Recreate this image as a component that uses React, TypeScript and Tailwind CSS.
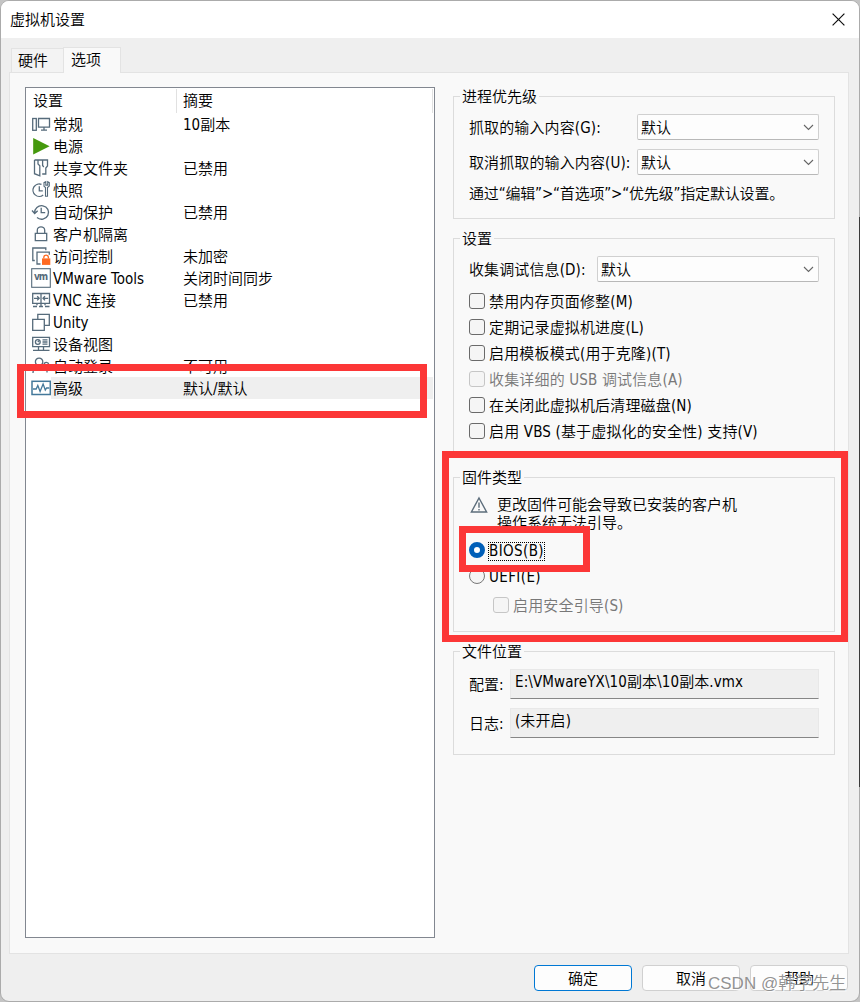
import { useState } from "react";
import type { ReactNode } from "react";

type Setting = {
  name: string;
  summary?: string;
  icon: ReactNode;
};

const settings: Setting[] = [
  {
    name: "常规",
    summary: "10副本",
    icon: (
      <>
        <rect x="2.7" y="5.5" width="3.6" height="11.8" />
        <path d="M8.5 5.5h11v8.7h-11zM14 14.2v2.6M11 17.2h6M4.5 8v0.1" />
      </>
    ),
  },
  {
    name: "电源",
    icon: <path d="M3.2 3v16.4L19.6 11.2z" fill="#45990d" stroke="none" />,
  },
  {
    name: "共享文件夹",
    summary: "已禁用",
    icon: <path d="M4.5 3h13v6l-1.7 2v6h-3.6M4.5 3v13.7l5.3 2.2V8.7L8 7V3.2M12.6 3v5.5l1.2 1.5" />,
  },
  {
    name: "快照",
    icon: (
      <>
        <path d="M11.5 5.4a6.2 6.2 0 1 0 1.7 10.5M9.3 7.3v4.6h3.5" />
        <path d="M14 3.5v3.7l1.5 1.3v8.8h2V8.5L19.3 7V3.5l-1.6-.8v3.4h-1.9V2.7z" strokeWidth="1.1" />
      </>
    ),
  },
  {
    name: "自动保护",
    summary: "已禁用",
    icon: <path d="M4.6 12A7 6.8 0 1 1 7 16.6M2 9.5l2.7 3 3-2.7M11.2 6.7v5h4" />,
  },
  {
    name: "客户机隔离",
    icon: <path d="M5.3 10.3h11.4v7.4H5.3zM7.3 10V7.3a3.7 3.5 0 0 1 7.4 0V10" />,
  },
  {
    name: "访问控制",
    summary: "未加密",
    icon: (
      <>
        <path d="M4.8 15.5H2.8V3h13v2.2M10.5 19H7V7.2h12.3v2.5" />
        <rect x="12" y="13.4" width="8.3" height="6.5" fill="#ff6a21" stroke="none" />
        <path d="M13.8 13.4v-1a2.3 2.3 0 0 1 4.6 0v1" stroke="#ff6a21" />
      </>
    ),
  },
  {
    name: "VMware Tools",
    summary: "关闭时间同步",
    icon: (
      <>
        <rect x="1.7" y="1.7" width="18.6" height="18.6" strokeWidth="1.1" />
        <text x="11" y="13.3" textAnchor="middle" fontSize="10" fontWeight="700" fill="#566b7b" stroke="none" textLength="14">
          vm
        </text>
      </>
    ),
  },
  {
    name: "VNC 连接",
    summary: "已禁用",
    icon: (
      <path d="M2.7 4.5h16.8v9.8H2.7zM11 4.5v12.7M3 17.5h4M9 17.5h4M15 17.5h4.5M7 14.3v2M15 14.3v2M4 9.3h5M7.2 7.2l2 2.1-2 2.1M18.2 9.3h-5M15 7.2l-2 2.1 2 2.1" />
    ),
  },
  {
    name: "Unity",
    icon: <path d="M7.8 8V3.3h11.5v11h-4.8M2.7 8.3h11.6v11H2.7z" />,
  },
  {
    name: "设备视图",
    icon: (
      <>
        <path d="M2.7 4.3h16.8v9.4H2.7zM8.5 14v3M13.5 14v3M3 17.3h16.5M12.5 6.8h5M12.5 9h5M12.5 11.2h5" />
        <circle cx="7.8" cy="9" r="2.4" />
        <path d="M7.8 9l1.6-1.6" />
      </>
    ),
  },
  {
    name: "自动登录",
    summary: "不可用",
    icon: <path d="M6.8 9.7a3.7 3.7 0 1 1 4.6 0l1.4 1.4M3 18c0-4 2-5.8 4.3-7M14 9.6a2.4 2.4 0 1 1 3 2.5v5.5" />,
  },
  {
    name: "高级",
    summary: "默认/默认",
    icon: (
      <g stroke="#43789a">
        <rect x="2" y="4.3" width="18.3" height="13.2" strokeWidth="1.5" />
        <path d="M3 12h3.2l1.6-3.5 2.3 6 3-7.5 2.2 6 1.3-2h2.7" />
      </g>
    ),
  },
];

const options = [
  { label: "禁用内存页面修整(M)" },
  { label: "定期记录虚拟机进度(L)" },
  { label: "启用模板模式(用于克隆)(T)" },
  { label: "收集详细的 USB 调试信息(A)", disabled: true },
  { label: "在关闭此虚拟机后清理磁盘(N)" },
  { label: "启用 VBS (基于虚拟化的安全性) 支持(V)" },
];

function Group({ title, className, children }: { title: string; className: string; children: ReactNode }) {
  return (
    <fieldset className={`w-[382px] shrink-0 border border-[#dcdcdc] pr-[15px] pl-[15px] ${className}`}>
      <legend className="-ml-[9px] h-[17px] px-0.5 leading-[19px]">{title}</legend>
      {children}
    </fieldset>
  );
}

function Dropdown({ className }: { className: string }) {
  return (
    <button
      className={`flex h-[26px] items-center justify-between rounded-[2px] border border-[#d0d0d0] border-b-[#b8b8b8] bg-[#fdfdfd] pr-[4px] pl-[3px] ${className}`}
    >
      <span className="pt-0.5">默认</span>
      <svg width="11" height="7" viewBox="0 0 11 7" fill="none" stroke="#666" strokeWidth="1.1">
        <path d="M1 1l4.5 4.5L10 1" />
      </svg>
    </button>
  );
}

function Checkbox({ label, disabled, className }: { label: string; disabled?: boolean; className?: string }) {
  const [checked, setChecked] = useState(false);
  return (
    <label
      className={`flex h-[26px] items-center gap-1 tracking-[0.16px] ${disabled ? "text-[#787878]" : ""} ${className ?? ""}`}
    >
      <input
        type="checkbox"
        checked={checked}
        disabled={disabled}
        onChange={(e) => setChecked(e.target.checked)}
        className={`size-4 appearance-none rounded-[3px] border bg-[#f5f5f5] checked:bg-[#005fb8] ${
          disabled ? "border-[#c6c6c6]" : "border-[#6a6a6a]"
        }`}
      />
      <span className="pt-0.5">{label}</span>
    </label>
  );
}

function PathField({ label, value }: { label: string; value: string }) {
  return (
    <div className="flex h-[30px] items-center">
      <span className="w-[41px] pt-0.5">{label}</span>
      <div className="h-[30px] flex-1 border border-[#e8e8e8] border-b-[#868686] bg-[#efefef] pl-1 leading-[25px] tracking-[0.1px]">
        {value}
      </div>
    </div>
  );
}

export default function App() {
  const [selected, setSelected] = useState("高级");
  const [firmware, setFirmware] = useState("BIOS");

  return (
    <div className="relative h-[1002px] w-[860px] bg-[#c4c4c4] font-['DejaVu_Sans_Condensed','Noto_Sans_CJK_SC',sans-serif] text-[15px] leading-[18px] font-[350] whitespace-nowrap text-black">
      <div className="flex h-[1002px] w-[860px] flex-col overflow-hidden rounded-[9px] border border-[#ababab] bg-[#efefef]">
        <div className="flex h-[37px] shrink-0 items-center justify-between bg-white pr-[14px] pl-[9px]">
          <span>虚拟机设置</span>
          <svg width="13" height="13" viewBox="0 0 13 13" stroke="#111" strokeWidth="1.2">
            <path d="M.6.6l11.8 11.8M12.4.6L.6 12.4" />
          </svg>
        </div>

        <div className="flex h-[34px] shrink-0 items-end pl-[10px]">
          <div className="h-6 w-[52px] border border-r-0 border-b-0 border-[#e3e3e3] bg-[#f3f3f3] pl-[6px] leading-[25px]">
            硬件
          </div>
          <div className="z-10 -mb-px h-[26px] w-[58px] border border-b-0 border-[#e3e3e3] bg-[#f9f9f9] pl-[7px] leading-[25px]">
            选项
          </div>
        </div>

        <div className="ml-2 flex h-[882px] w-[840px] shrink-0 border border-[#e3e3e3] bg-[#f9f9f9] pt-[14px] pl-[15px]">
          <div className="h-[851px] w-[410px] border border-[#828790] bg-white">
            <div className="flex h-[25px] pt-px">
              <span className="w-[151px] border-r border-[#e1e1e1] pl-[7px] leading-[25px]">设置</span>
              <span className="w-[256px] border-r border-[#e1e1e1] pl-[6px] leading-[25px]">摘要</span>
            </div>
            {settings.map((s) => (
              <div key={s.name} className="flex h-[22px] pl-1" onClick={() => setSelected(s.name)}>
                <svg
                  width="22"
                  height="22"
                  viewBox="0 0 22 22"
                  fill="none"
                  stroke="#566b7b"
                  strokeWidth="1.3"
                  className="-mr-px shrink-0"
                >
                  {s.icon}
                </svg>
                <div className={`flex w-[382px] pl-[2px] leading-[24px] ${selected === s.name ? "bg-[#efefef]" : ""}`}>
                  <span className="w-[130px]">{s.name}</span>
                  <span>{s.summary}</span>
                </div>
              </div>
            ))}
          </div>

          <div className="ml-[18px] flex flex-col">
            <Group title="进程优先级" className="mt-px h-[131px]">
              <div className="mt-[9px] flex items-center justify-between">
                <span className="pt-0.5 tracking-[0.12px]">抓取的输入内容(G):</span>
                <Dropdown className="w-[182px]" />
              </div>
              <div className="mt-[9px] flex items-center justify-between">
                <span className="pt-0.5 tracking-[0.12px]">取消抓取的输入内容(U):</span>
                <Dropdown className="w-[182px]" />
              </div>
              <div className="mt-[9px] leading-5 tracking-[-0.18px]">通过“编辑”&gt;“首选项”&gt;“优先级”指定默认设置。</div>
            </Group>

            <Group title="设置" className="mt-[11px] h-[227px]">
              <div className="mt-[9px] mb-[6px] flex items-center justify-between">
                <span className="pt-0.5 tracking-[0.12px]">收集调试信息(D):</span>
                <Dropdown className="w-[222px]" />
              </div>
              {options.map((o) => (
                <Checkbox key={o.label} label={o.label} disabled={o.disabled} />
              ))}
            </Group>

            <Group title="固件类型" className="mt-[12px] h-[163px]">
              <div className="mt-[10px] flex h-9">
                <svg width="18" height="18" viewBox="0 0 18 18" fill="none" stroke="#5c6d7b" strokeWidth="1.4" className="mr-[9px] ml-px">
                  <path d="M9 2l7.6 14H1.4zM9 6.5v5.2M9 13v1.5" />
                </svg>
                <p>
                  更改固件可能会导致已安装的客户机
                  <br />
                  操作系统无法引导。
                </p>
              </div>
              {["BIOS", "UEFI"].map((type) => (
                <label key={type} className="flex h-[26px] items-center gap-1 tracking-[0.4px] first-of-type:mt-[5px]">
                  <input
                    type="radio"
                    name="firmware"
                    checked={firmware === type}
                    onChange={() => setFirmware(type)}
                    className="size-4 appearance-none rounded-full border border-[#777] bg-[#f5f5f5] checked:border-5 checked:border-[#005fb8] checked:bg-white"
                  />
                  <span
                    className={`mt-0.5 leading-[17px] ${firmware === type ? "outline-1 outline-black outline-dotted" : ""}`}
                  >
                    {type === "BIOS" ? "BIOS(B)" : "UEFI(E)"}
                  </span>
                </label>
              ))}
              <Checkbox label="启用安全引导(S)" disabled className="mt-[3px] ml-6" />
            </Group>

            <Group title="文件位置" className="mt-[11px] h-[112px]">
              <div className="mt-[9px] flex flex-col gap-[9px]">
                <PathField label="配置:" value="E:\VMwareYX\10副本\10副本.vmx" />
                <PathField label="日志:" value="(未开启)" />
              </div>
            </Group>
          </div>
        </div>

        <div className="mt-[11px] flex justify-end gap-[10px] pr-[11px]">
          <button className="h-[26px] w-[98px] rounded border border-[#0078d4] bg-[#fdfdfd] pt-0.5">确定</button>
          <button className="h-[26px] w-[98px] rounded border border-[#d0d0d0] bg-[#fdfdfd] pt-0.5">取消</button>
          <button className="h-[26px] w-[98px] rounded border border-[#d0d0d0] bg-[#fdfdfd] pt-0.5">帮助</button>
        </div>
      </div>

      {/* annotations */}
      <div className="absolute top-[364px] left-[17px] h-[54px] w-[410px] border-7 border-[#fc3737]" />
      <div className="absolute top-[451px] left-[442px] h-[191px] w-[406px] border-7 border-[#fc3737]" />
      <div className="absolute top-[526px] left-[459px] h-[46px] w-[131px] border-7 border-[#fc3737]" />
      <div className="absolute top-[217px] right-0 h-[570px] w-px bg-[#3a3a3a]" />
      <div className="absolute top-[974px] left-[708px] font-['Liberation_Sans','Noto_Sans_CJK_SC',sans-serif] text-[17px] leading-5 text-[#858585]/90 [text-shadow:1px_1px_1px_#fff]">
        CSDN @韩学先生
      </div>
    </div>
  );
}
